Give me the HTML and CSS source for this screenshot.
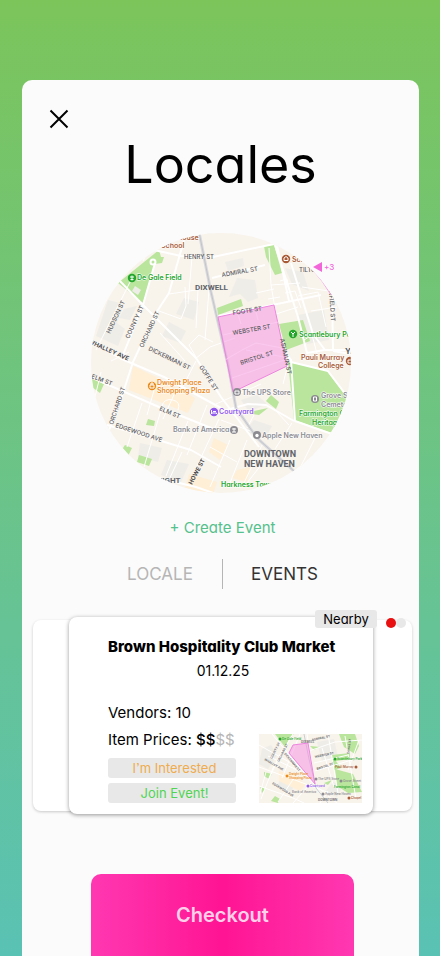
FILE: index.html
```html
<!DOCTYPE html>
<html lang="en">
<head>
<meta charset="utf-8">
<meta name="viewport" content="width=device-width, initial-scale=1">
<title>Locales</title>
<link rel="stylesheet" href="styles.css">
</head>
<body>
<main class="panel">
  <button class="close" type="button" aria-label="Close">
    <svg viewBox="0 0 20 20"><path d="M1.5 1.5 18.5 18.5M18.5 1.5 1.5 18.5"/></svg>
  </button>
  <h1>Locales</h1>

  <svg class="map" viewBox="90 233 260 260" role="img" aria-label="Map of New Haven">
    <defs><clipPath id="round"><circle cx="220" cy="363" r="130"/></clipPath></defs>
    <g clip-path="url(#round)">
      <path class="land" d="M90 233h260v260H90z"/>
      <g class="block">
        <path d="M107 300l16 4-7 19 8 6-7 17-22-10zM236 278l18 2 3 18-10 4-8-8-11 3zM139 443l22 5-4 14-20-5zM123 309l13-3-7 14-11-2zM297 315l26-5 5 30-22 4zM166 460l22 4-8 18-20-7zM183 298l15 4-5 18-18-6zM240 400l16-5 10 9-18 8zM168 322l17 9-6 12-18-7zM224 262l18-4 1 8-16 5zM284 268l18 4 6 19-17-7zM253 420l18 6-7 13-20-8z"/>
      </g>
      <path class="shop" d="M132 366l32 15 30 17-7 15-59-23zM213 438l14 7-8 15-11-8zM188 474l28 8-4 12-28-6zM236 470l14-3-4 15-15-4z"/>
      <g class="park">
        <path d="M117 283l41-33 2 7h3l-2 6-7 1-12 39z"/>
        <path d="M263 246l10-1 8 28-7 2-9-18zM216 308l24-9 2 7-25 9zM278 324l24-4 7 21-24 9zM287 362l38 8 25 33v31l-22-2-35-12zM91 378l12 6-4 9-8-6zM147 419l7 2-1 5-8-1zM124 445l7 3-4 8-7-5zM138 455l13 4-3 7-12-4zM253 411l14-3-9 7-6-1zM265 401l5-6 8 7-3 7z"/>
      </g>
      <path class="block" d="M134 286l6 4-3 5-6-4z"/>
      <g class="lanes">
        <path d="M130 280l-35 70M147 251l-5 10M191 257l-4 47M168 294l34-5M158 311l22 8 5-13-1-19M197 290l-2 38M208 290l-4 50M195 357l-7-12 10-10 14 7M194 359l15-12 25-9M159 333l25 28M110 361l18-9M141 403l-15 44M160 410l-17 57M195 361l-16 31M206 405l-20 50M187 421l-22 55M181 452l-15 32M218 419l-29 62M229 440l-20 47M246 440l-19 48M262 443l-21 44M209 447l27 15M220 420l40 15M271 451l-25 32M100 372l-6 25M155 383l-9 32M176 388l-14 31M287 364l-5 20M268 248l2 37 29-2M270 285l5 29 22-7M255 293l18-4M267 299l12-2M279 281l7-2 3 14M284 293l10-2 6 17M301 287l27 4M297 296l20-4 8 35M310 311l26-4M303 340l8-5 6 22M245 350l38 7M215 404l45-20M253 415l-7 13M275 411l13 14M291 423l-17 26M316 434l-20 40M161 406q2-8 11-6 8 2 5 10"/>
      </g>
      <g class="roads">
        <path d="M154 263l-12 42-22 55M117 279l25 26 53 53 25 39 38 50M153 250l27 6 32 1 61-13M183 240l-15 53-13 20-23 49-12 37-13 34M88 341l35 19 40 17 57 31M89 377l69 30 62 25M106 425l51 15 33 10 30 17M211 278l53-13M274 245l23 72 9 36 17-3M218 316l102-21M290 263l22 71 12 16h37M331 287l1 64M350 354l-18-3M280 348l10 12 4 61 34 12 26 9M222 411l25-7 18 1 28 16M290 362l37 9 25 33M145 475l50 12 26 9M276 245l12 56"/>
      </g>
      <circle class="loop" cx="152" cy="262" r="2.500"/>
      <path class="rail" d="M198 232l12 60 17 73 8 43 21 30 38 34"/>
      <path class="rail-line" d="M198 232l12 60 17 73 8 43 21 30 38 34"/>
      <path class="zone" d="M217 317l56-12 13 61-54 26z"/>
      <path class="zone-lanes" d="M222 335l55-13M224 360l17-10 14-7 26 5M231 378l55-19M236 311l4 13M254 308l3 12"/>
      <g class="street">
        <text x="183" y="259">HENRY ST</text>
        <text transform="translate(221 277) rotate(-10)">ADMIRAL ST</text>
        <text transform="translate(232 315) rotate(-9)">FOOTE ST</text>
        <text transform="translate(232 335) rotate(-10)">WEBSTER ST</text>
        <text transform="translate(240 365) rotate(-18)">BRISTOL ST</text>
        <text transform="translate(279 339) rotate(78)">ASHMUN ST</text>
        <text transform="translate(328 291) rotate(86)">NFIELD ST</text>
        <text x="298" y="272">TILTON</text>
        <text transform="translate(109 334) rotate(-65)">HUDSON ST</text>
        <text transform="translate(128 339) rotate(-65)">COUNTY ST</text>
        <text transform="translate(142 348) rotate(-65)">ORCHARD ST</text>
        <text transform="translate(147 350) rotate(26)">DICKERMAN ST</text>
        <text transform="translate(198 367) rotate(57)">GOFFE ST</text>
        <text transform="translate(90 378) rotate(21)">ELM ST</text>
        <text transform="translate(158 410) rotate(23)">ELM ST</text>
        <text transform="translate(112 425) rotate(-72)">ORCHARD ST</text>
        <text transform="translate(114 427) rotate(18)">EDGEWOOD AVE</text>
        <text class="major" transform="translate(87 343) rotate(24)">WHALLEY AVE</text>
        <text class="major" transform="translate(191 485) rotate(-62)">HOWE ST</text>
      </g>
      <g class="district">
        <text x="194" y="290">DIXWELL</text>
        <text class="large" x="243" y="457">DOWNTOWN</text>
        <text class="large" x="243" y="467">NEW HAVEN</text>
        <text x="149" y="483">DWIGHT</text>
      </g>
      <g class="place green">
        <circle cx="131" cy="278" r="4.200"/><path class="mark" d="M131 275.500v5M129 277h4M129.500 279.500h3"/>
        <text x="136" y="280">De Gale Field</text>
        <circle cx="292" cy="334" r="4.200"/><path class="mark" d="M290 332l2 2 2-2M292 334v3"/>
        <text x="298" y="337">Scantlebury Park</text>
        <text x="298" y="416">Farmington Canal</text><text x="311" y="425">Heritage</text>
        <text x="220" y="487">Harkness Tower</text>
      </g>
      <g class="place brown">
        <text x="160" y="248">School</text><text x="176" y="240">House</text>
        <circle cx="285" cy="259" r="4.200"/><path class="mark" d="M283 258l2-1.500 2 1.500v2.500h-4z"/>
        <text x="291" y="262">School</text>
        <text x="300" y="360">Pauli Murray</text><text x="317" y="368">College</text>
        <circle cx="349" cy="361" r="4.200"/><path class="mark" d="M347 360h4v3h-4z"/>
      </g>
      <g class="place orange">
        <circle cx="151" cy="386" r="4.200"/><path class="mark" d="M149 385h4v3h-4zM150 385v-2h2v2"/>
        <text x="156" y="385">Dwight Place</text><text x="156" y="393">Shopping Plaza</text>
      </g>
      <g class="place purple">
        <circle cx="213" cy="412" r="4.200"/><path class="mark" d="M210.500 410v4M210.500 413h5v1M212 411.500h3"/>
        <text x="218" y="414">Courtyard</text>
      </g>
      <g class="place gray">
        <circle cx="236" cy="392" r="4"/><path class="mark" d="M234 391h4v3h-4z"/><text x="241" y="395">The UPS Store</text>
        <circle cx="233" cy="430" r="4"/><path class="mark" d="M231 429h4M231 432h4M233 428v4"/><text x="172" y="432">Bank of America</text>
        <circle cx="256" cy="435" r="4"/><circle class="apple" cx="256" cy="435.500" r="1.700"/><text x="261" y="438">Apple New Haven</text>
        <circle cx="314" cy="399" r="4"/><path class="mark" d="M312.500 401v-4h3v4z"/><text x="320" y="398">Grove Street</text><text x="320" y="407">Cemetery</text>
      </g>
      <text class="cut" x="344" y="354">YALE</text>
      <path class="route" d="M289 251q25 16 41 44"/>
    </g>
    <path class="arrow" d="M312 267l9-5v10z"/>
    <text class="more" x="323" y="270">+3</text>
  </svg>

  <button class="create" type="button">+ Create Event</button>
  <nav class="tabs" aria-label="View">
    <a class="muted" href="#locale">LOCALE</a>
    <a href="#events" aria-current="page">EVENTS</a>
  </nav>

  <section class="deck" aria-label="Events">
    <div class="behind"></div>
    <article class="event">
      <span class="nearby">Nearby</span>
      <h2>Brown Hospitality Club Market</h2>
      <time datetime="2025-01-12">01.12.25</time>
      <div class="details">
        <div class="facts">
          <p>Vendors: 10</p>
          <p>Item Prices: <b>$$</b><span>$$</span></p>
          <button class="interested" type="button">I’m Interested</button>
          <button class="join" type="button">Join Event!</button>
        </div>
        <svg class="thumb" viewBox="0 0 103 69" role="img" aria-label="Event area map">
          <path class="land" d="M0 0h103v69H0z"/>
          <path class="block" d="M3 15l9-4 6 10-9 14-9-5zM58 8l17-3 4 18-16 4zM23 40l15 5-6 13-14-5zM74 48l10 4-6 11-12-5z"/>
          <path class="shop" d="M20 37l16 5 11 8-6 7-21-10z"/>
          <path class="park" d="M16 0h19l-4 3-5 10zM80 0h16l4 12-4 8-11-7zM73 21l18-2v6l-14 2 5 7-7 2zM76 35l18 5 9 18-14 1-11-7zM5 38l8 2-3 5-5-3zM51 12l10 1-6 3zM16 62l5 3-2 4-7-2zM65 49l8-3-4 5zM1 52l5 3-3 4z"/>
          <g class="small-roads">
            <path d="M0 11l32 18 24 22 23 19M13 0l27 33 17 18M34 0L14 34 2 65M48 0l8 51 8 12M0 33l36 13 32 12M0 52l34 12 11 5M50 17l26-9 27-2M55 29l34-8M56 37l40-12M69 0l10 59M86 2l11 63M41 0l-18 44M23 16L10 45M63 14l12 39M100 6L89 36M9 22l31 15M7 38L1 60M35 44L19 68M52 49L34 69M69 57l-8 12"/>
          </g>
          <path class="thumb-rail" d="M45 0l5 25 7 29 12 15"/>
          <path class="zone" d="M34 11l15-2 7 41-26-31z"/>
          <g class="micro">
            <text x="42" y="9">DIXWELL</text><text x="59" y="67">DOWNTOWN</text>
            <text transform="translate(13 25) rotate(-63)">COUNTY ST</text><text transform="translate(20 28) rotate(-63)">ORCHARD ST</text><text transform="translate(25 20) rotate(50)">DICKERMAN ST</text>
            <text transform="translate(5 26) rotate(30)">WHALLEY AVE</text><text transform="translate(13 50) rotate(32)">EDGEWOOD AVE</text>
            <text transform="translate(53 7) rotate(-12)">ADMIRAL ST</text><text transform="translate(56 24) rotate(-12)">WEBSTER ST</text><text transform="translate(58 36) rotate(-18)">BRISTOL ST</text>
            <text transform="translate(90 20) rotate(-82)">CANAL ST</text>
          </g>
          <g class="mini green"><circle cx="21" cy="5" r="1.500"/><text x="23" y="6">De Gale Field</text><circle cx="76" cy="25" r="1.500"/><text x="78" y="26">Scantlebury Park</text><text x="75" y="54">Farmington Canal</text></g>
          <g class="mini orange"><circle cx="28" cy="42" r="1.500"/><text x="30" y="41">Dwight Place</text><text x="30" y="45">Shopping Plaza</text></g>
          <g class="mini gray"><circle cx="57" cy="45" r="1.500"/><text x="59" y="46">The UPS Store</text><text x="33" y="59">Bank of America</text><circle cx="64" cy="60" r="1.500"/><text x="66" y="61">Apple New Haven</text><circle cx="82" cy="47" r="1.500"/><text x="84" y="48">Grove Street</text></g>
          <g class="mini purple"><circle cx="49" cy="52" r="1.500"/><text x="51" y="53">Courtyard</text></g>
          <g class="mini brown"><text x="76" y="34">Pauli Murray</text><circle cx="97" cy="33" r="1.500"/><circle cx="90" cy="64" r="1.500"/><text x="92" y="65">Chapel</text></g>
        </svg>
      </div>
    </article>
    <div class="dots" aria-hidden="true"><i></i><i></i></div>
  </section>

  <button class="checkout" type="button">Checkout</button>
</main>
</body>
</html>
```
FILE: styles.css
```css
* { box-sizing: border-box; }
html { min-height: 100%; background: linear-gradient(#7cc55b, #5ac2b4); }
body {
  margin: 0;
  padding: 80px 21px 0 22px;
  font-family: Inter, sans-serif;
  font-feature-settings: "cv11", "ss03";
  color: #000;
}
button { margin: 0; padding: 0; border: 0; background: none; font: inherit; font-feature-settings: inherit; cursor: pointer; }
a { color: inherit; text-decoration: none; }
.panel {
  display: flex;
  flex-direction: column;
  align-items: center;
  min-height: calc(100vh - 80px);
  padding: 29px 7px 0 11px;
  border-radius: 10px 10px 0 0;
  background: #fbfbfb;
}
.close { align-self: flex-start; width: 20px; height: 20px; margin-left: 16px; }
.close svg { display: block; width: 20px; height: 20px; fill: none; stroke: #000; stroke-width: 2; }
h1 { margin: 4px 4px 0 0; font-size: 52px; line-height: 64px; font-weight: 400; }
.map { display: block; width: 260px; height: 260px; margin: 36px 4px 0 0; overflow: visible; }
.land { fill: #f8f3eb; }
.block { fill: #efede8; }
.shop { fill: #ffefd6; }
.park { fill: #b9e59c; }
.lanes, .roads, .small-roads, .loop { fill: none; stroke: #fff; stroke-linejoin: round; }
.lanes { stroke-width: 1; }
.roads, .loop { stroke-width: 2; }
.small-roads { stroke-width: 1; }
.rail { fill: none; stroke: #d9dade; stroke-width: 3; }
.rail-line { fill: none; stroke: #c3c5ca; stroke-width: 1; }
.thumb-rail { fill: none; stroke: #cacdd3; stroke-width: 1; }
.zone { fill: #f58fe3; fill-opacity: .5; stroke: #ee84df; stroke-width: 1; }
.zone-lanes { fill: none; stroke: #fbc9f0; stroke-width: 1; }
.street { font-size: 6px; font-weight: 500; fill: #58595d; }
.street .major { font-weight: 700; fill: #4b4c50; }
.district { font-family: Roboto, sans-serif; font-size: 8px; font-weight: 700; fill: #606369; }
.district .large { font-size: 9px; }
.place { font-size: 7px; font-weight: 600; }
.place text { stroke: #fff; stroke-width: 1; paint-order: stroke; }
.mark { fill: none; stroke: #fff; stroke-width: 1; }
.apple { fill: #fff; }
.green { fill: #24a52c; }
.brown { fill: #a85b36; }
.orange { fill: #e98a1c; }
.purple { fill: #9259ed; }
.gray { fill: #8b8b91; }
.cut { font-size: 8px; font-weight: 700; fill: #55565a; }
.route { fill: none; stroke: #f5a7e8; stroke-width: 1; }
.arrow, .more { fill: #f266da; }
.more { font-size: 8px; font-weight: 500; }
.create { margin-top: 25px; font-size: 15px; line-height: 20px; color: #55c18c; }
.tabs { display: grid; grid-template-columns: 1fr 1fr; align-items: center; width: 248px; margin-top: 21px; font-size: 17px; line-height: 30px; color: #333; text-align: center; }
.tabs .muted { border-right: 1px solid #b5b5b5; color: #b5b5b5; }
.deck { display: grid; grid-template-columns: 36px minmax(0, 1fr) 39px; width: 100%; margin-top: 28px; }
.behind { grid-area: 1 / 1 / 2 / 4; margin: 3px 0 3px; border-radius: 8px; background: #fff; box-shadow: 0 1px 3px #0003; }
.event {
  grid-area: 1 / 2;
  position: relative;
  padding: 18px 11px 11px 39px;
  border-radius: 8px;
  background: #fff;
  box-shadow: 0 1px 4px #0006;
}
.nearby { position: absolute; right: -4px; top: -7px; width: 62px; border-radius: 3px; background: #e8e8e8; font-size: 13px; line-height: 18px; text-align: center; }
h2 { margin: 0; font-size: 15px; line-height: 24px; font-weight: 800; white-space: nowrap; }
time { display: block; margin-right: 24px; font-size: 14px; line-height: 24px; text-align: center; }
.details { display: flex; justify-content: space-between; align-items: flex-end; margin-top: 16px; }
.facts { display: flex; flex-direction: column; width: 128px; }
.facts p { margin: 0; font-size: 15px; line-height: 27px; white-space: nowrap; }
.facts b { font-weight: 500; }
.facts p span { color: #b5b5b5; }
.facts button { height: 20px; margin-top: 5px; padding-left: 5px; border-radius: 3px; background: #e8e8e8; font-size: 13px; line-height: 20px; }
.facts .interested { color: #efac4e; }
.facts .join { color: #51d452; }
.thumb { display: block; flex: none; width: 103px; height: 69px; }
.micro { font-size: 3px; font-weight: 600; fill: #626267; }
.mini { font-size: 3px; font-weight: 600; }
.dots { position: relative; grid-area: 1 / 3; display: flex; height: 10px; margin: 1px 0 0 13px; }
.dots i { width: 10px; height: 10px; border-radius: 50%; background: #e8e8e8; }
.dots i:first-child { background: #e81010; }
.checkout {
  width: 263px;
  height: 82px;
  margin-top: 60px;
  border-radius: 10px 10px 0 0;
  background: linear-gradient(90deg, #ff38b1, #ff1493 50%, #ff38b1);
  font-size: 20px;
  font-weight: 600;
  color: #ffd0e9;
}
```
